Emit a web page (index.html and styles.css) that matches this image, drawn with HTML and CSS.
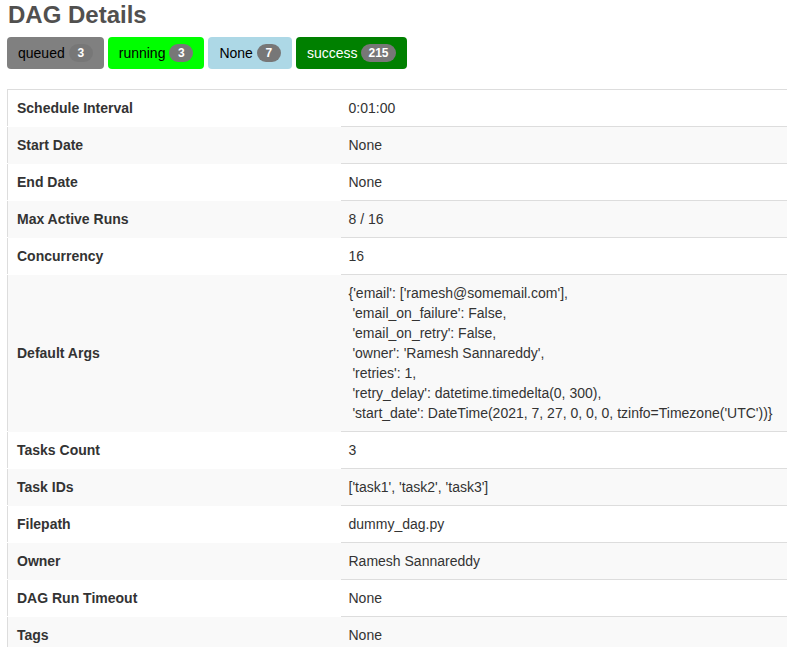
FILE: index.html
```html
<!DOCTYPE html>
<html>
<head>
<meta charset="utf-8">
<link rel="stylesheet" href="styles.css">
</head>
<body>
<div class="page">
  <h2 class="title">DAG Details</h2>
  <div class="states">
    <span class="state state-queued">queued <span class="badge">3</span></span>
    <span class="state state-running">running <span class="badge">3</span></span>
    <span class="state state-none">None <span class="badge">7</span></span>
    <span class="state state-success">success <span class="badge">215</span></span>
  </div>
  <table class="details">
    <colgroup><col class="col-key"><col></colgroup>
    <tbody>
      <tr><th>Schedule Interval</th><td>0:01:00</td></tr>
      <tr><th>Start Date</th><td>None</td></tr>
      <tr><th>End Date</th><td>None</td></tr>
      <tr><th>Max Active Runs</th><td>8 / 16</td></tr>
      <tr><th>Concurrency</th><td>16</td></tr>
      <tr><th>Default Args</th><td class="code">{'email': ['ramesh@somemail.com'],
 'email_on_failure': False,
 'email_on_retry': False,
 'owner': 'Ramesh Sannareddy',
 'retries': 1,
 'retry_delay': datetime.timedelta(0, 300),
 'start_date': DateTime(2021, 7, 27, 0, 0, 0, tzinfo=Timezone('UTC'))}</td></tr>
      <tr><th>Tasks Count</th><td>3</td></tr>
      <tr><th>Task IDs</th><td>['task1', 'task2', 'task3']</td></tr>
      <tr><th>Filepath</th><td>dummy_dag.py</td></tr>
      <tr><th>Owner</th><td>Ramesh Sannareddy</td></tr>
      <tr><th>DAG Run Timeout</th><td>None</td></tr>
      <tr><th>Tags</th><td>None</td></tr>
    </tbody>
  </table>
</div>
</body>
</html>
```
FILE: styles.css
```css
html, body {
  margin: 0;
  padding: 0;
  overflow: hidden;
  background: #fff;
}
body {
  font-family: "Liberation Sans", Arial, sans-serif;
  font-size: 14px;
  line-height: 20px;
  color: #333;
}
.page {
  padding: 0 7px;
}
.title {
  margin: 1px 0 8px 1px;
  font-size: 24px;
  line-height: 28px;
  font-weight: bold;
  color: #51504f;
}
.states {
  display: flex;
  gap: 4px;
  margin-bottom: 20px;
}
.state {
  display: inline-flex;
  align-items: center;
  gap: 4px;
  height: 32px;
  box-sizing: border-box;
  padding: 0 11px;
  border-radius: 4px;
  color: #000;
  font-size: 14px;
}
.state-queued { background: #808080; }
.state-running { background: #00ff00; }
.state-none { background: #add8e6; }
.state-success { background: #008000; color: #fff; }
.badge {
  display: inline-block;
  min-width: 10px;
  padding: 3px 7px;
  font-size: 12px;
  font-weight: bold;
  line-height: 12px;
  color: #fff;
  text-align: center;
  background: #777;
  border-radius: 10px;
}
.details {
  width: 800px;
  border-collapse: collapse;
  table-layout: fixed;
  border-left: 1px solid #ddd;
  border-top: 1px solid #ddd;
}
.col-key { width: 333px; }
.details th,
.details td {
  padding: 8px;
  text-align: left;
  vertical-align: middle;
  line-height: 20px;
}
.details th {
  font-weight: bold;
  color: #333;
  padding-left: 9px;
  border-top: 1px solid transparent;
}
.details td {
  border-top: 1px solid #ddd;
  color: #333;
}
.details tr:first-child th {
  border-top: 1px solid #ddd;
}
.details tr:nth-child(even) th,
.details tr:nth-child(even) td {
  background: #f9f9f9;
}
.details td.code {
  white-space: pre;
}
```
